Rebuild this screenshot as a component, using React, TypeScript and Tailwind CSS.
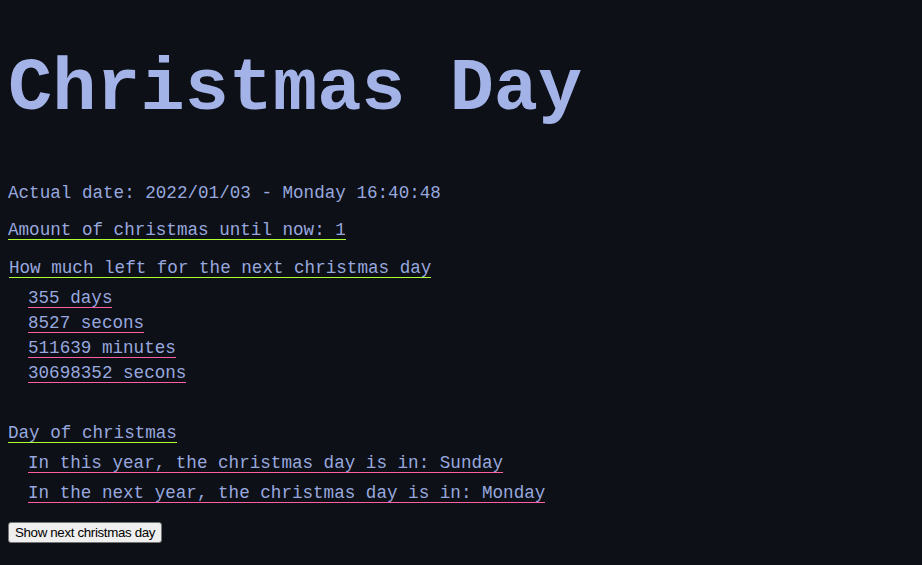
import React from "react";

const days = ["355 days", "8527 secons", "511639 minutes", "30698352 secons"];

// underlined line: fixed 20px row, 1px border drawn ~4px below the baseline
const Line = ({
  children,
  color,
  className = "",
}: {
  children: React.ReactNode;
  color: "green" | "pink";
  className?: string;
}) => (
  <div className={`flex h-[20px] ${className}`}>
    <span
      className={`mt-px border-b leading-[18px] ${
        color === "green" ? "border-[#adff2f]" : "border-[#ff5fa2]"
      }`}
    >
      {children}
    </span>
  </div>
);

export default function App() {
  return (
    <div className="min-h-[565px] w-full bg-[#0d1017] pl-2 pt-[48px] font-['Liberation_Mono','Courier_New',monospace] text-[#a3b3e8]">
      {/* Title */}
      <h1 className="text-[73.6px] font-bold leading-[84px]">Christmas Day</h1>

      <div className="mt-[51px] flex flex-col text-[17.6px] leading-[20px] text-[#98a8df]">
        <p>Actual date: 2022/01/03 - Monday 16:40:48</p>

        <Line color="green" className="mt-[17px]">
          Amount of christmas until now: 1
        </Line>

        <Line color="green" className="mt-[18px] ml-px">
          How much left for the next christmas day
        </Line>

        <div className="mt-[10px] ml-5 flex flex-col gap-[5px]">
          {days.map((d) => (
            <Line key={d} color="pink">
              {d}
            </Line>
          ))}
        </div>

        <Line color="green" className="mt-[40px]">
          Day of christmas
        </Line>

        <div className="mt-[10px] ml-5 flex flex-col gap-[10px]">
          <Line color="pink">In this year, the christmas day is in: Sunday</Line>
          <Line color="pink">In the next year, the christmas day is in: Monday</Line>
        </div>

        <div className="mt-[19px]">
          <button
            type="button"
            className="h-[21px] rounded-[3px] border border-[#767676] bg-[#efefef] px-[6px] font-['Liberation_Sans',Arial,sans-serif] text-[13.33px] leading-[17px] tracking-[-0.35px] text-black"
          >
            Show next christmas day
          </button>
        </div>
      </div>
    </div>
  );
}
